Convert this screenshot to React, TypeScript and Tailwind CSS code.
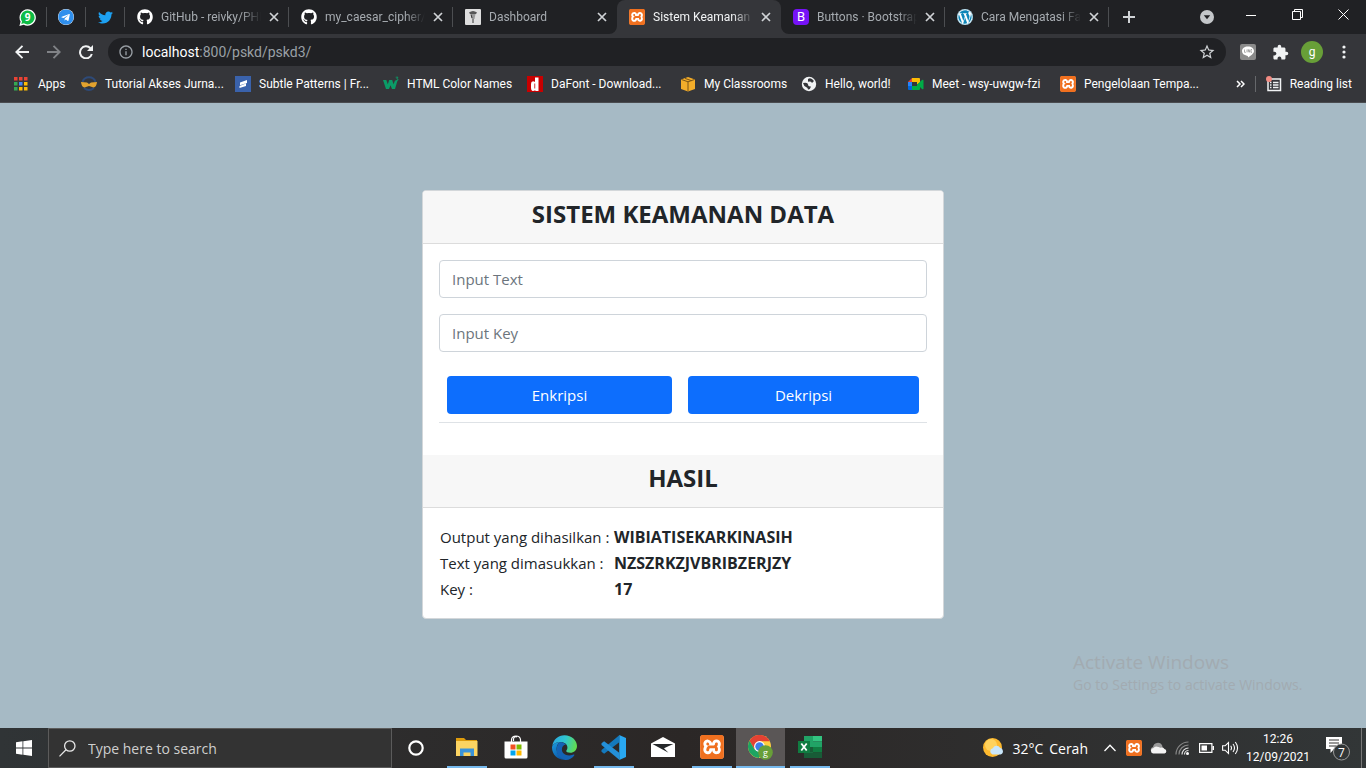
import type { ReactNode } from "react";
import { FaGithub, FaTelegram, FaTwitter, FaWordpress } from "react-icons/fa";
import { MdExtension, MdStarOutline, MdInfoOutline } from "react-icons/md";
import { SiXampp } from "react-icons/si";

function Xampp({ box, size }: { box: string; size: number }) {
  return (
    <span className={`${box} inline-flex shrink-0 items-center justify-center rounded-sm bg-white text-[#f0701f]`}>
      <SiXampp size={size} />
    </span>
  );
}

function CloseGlyph() {
  return (
    <svg width="10" height="10" viewBox="0 0 10 10" stroke="currentColor" strokeWidth="1.7">
      <path d="M1 1l8 8M9 1L1 9" />
    </svg>
  );
}

const whatsapp = (
  <svg width="17" height="17" viewBox="0 0 17 17">
    <path d="M8.5.3a8.2 8.2 0 1 1-3.8 15.4L.4 16.9l1.2-4.3A8.2 8.2 0 0 1 8.5.3z" fill="#fff" />
    <path d="M8.6 1.6a6.9 6.9 0 1 1-3.7 12.7l-2.6.7.7-2.6A6.9 6.9 0 0 1 8.6 1.6z" fill="#0ebc45" />
    <text x="8.6" y="12" textAnchor="middle" fontSize="10" fontWeight="700" fill="#fff" fontFamily="Open Sans, sans-serif">9</text>
  </svg>
);

const dashboardIcon = (
  <svg width="16" height="16" viewBox="0 0 16 16">
    <rect width="16" height="16" rx="1" fill="#dedede" />
    <path d="M4 3.500q4-3 8 0l-1 1.500H5z" fill="#555" />
    <path d="M6 5h4.500l-1 5H6.800z" fill="#999" />
    <path d="M6 5.500l1 3.500M8 10v4" stroke="#333" strokeWidth="1" />
  </svg>
);

const bootstrapIcon = (
  <span className="flex size-4 items-center justify-center rounded-sm bg-[#7612f7] text-[13px] leading-4 text-white">B</span>
);

type Tab = { title: string; icon: ReactNode; active?: boolean; edge?: boolean };

const tabs: Tab[] = [
  { title: "GitHub - reivky/PHP", icon: <FaGithub size={16} color="#fff" />, edge: true },
  { title: "my_caesar_cipher/index", icon: <FaGithub size={16} color="#fff" />, edge: true },
  { title: "Dashboard", icon: dashboardIcon },
  { title: "Sistem Keamanan Data", icon: <Xampp box="size-4" size={16} />, active: true },
  { title: "Buttons · Bootstrap v5", icon: bootstrapIcon, edge: true },
  {
    title: "Cara Mengatasi Fatal",
    icon: <span className="flex rounded-full bg-white text-[#0d86b8]"><FaWordpress size={16} /></span>,
    edge: true,
  },
];

function TabStrip() {
  return (
    <div className="flex h-[34px] items-stretch bg-[#202124] pl-2 text-[#a6abb0]">
      {[whatsapp, <FaTelegram size={16} color="#2f8fed" className="rounded-full bg-white" />, <FaTwitter size={15} color="#1da1f2" />].map((icon, i) => (
        <button key={i} aria-label="Pinned tab" className="flex w-[39px] shrink-0 items-center">
          <span className="flex flex-1 justify-center">{icon}</span>
          <span className="h-5 w-px bg-[#4c4e51]" />
        </button>
      ))}
      {tabs.map((tab) => (
        <div
          key={tab.title}
          className={`relative flex w-[164px] min-w-0 items-center pl-3 ${tab.active ? "rounded-t-lg bg-[#35363a] text-[#f1f3f4]" : ""}`}
        >
          {tab.active && (
            <svg className="absolute bottom-0 -left-2" width="180" height="8" viewBox="0 0 180 8" fill="#35363a">
              <path d="M8 0v8H0a8 8 0 0 0 8-8zM172 0v8h8a8 8 0 0 1-8-8z" />
            </svg>
          )}
          {tab.icon}
          <a
            href="#tab"
            className="ml-2 w-[100px] overflow-hidden [mask-image:linear-gradient(to_right,black_80%,transparent)] text-[12px] whitespace-nowrap"
          >
            {tab.title}
          </a>
          <button aria-label={`Close ${tab.title}`} className="ml-2 flex text-[#d0d3d6]">
            <CloseGlyph />
          </button>
          {tab.edge && <span className="ml-auto h-5 w-px bg-[#4c4e51]" />}
        </div>
      ))}
      <button aria-label="New tab" className="ml-3.5 flex items-center text-[#d0d3d6]">
        <svg width="12" height="12" viewBox="0 0 12 12" stroke="currentColor" strokeWidth="2"><path d="M6 0v12M0 6h12" /></svg>
      </button>
      <div className="ml-auto flex items-stretch text-white">
        <button aria-label="Search tabs" className="mr-3.5 flex items-center">
          <svg width="14" height="14" viewBox="0 0 14 14"><circle cx="7" cy="7" r="7" fill="#c4c7ca" /><path d="M3.8 5.3h6.4L7 9.3z" fill="#202124" /></svg>
        </button>
        <button aria-label="Minimize" className="flex w-[46px] items-center justify-center pb-1">
          <span className="h-px w-2.5 bg-white" />
        </button>
        <button aria-label="Restore" className="flex w-[46px] items-center justify-center pb-1.5">
          <svg width="11" height="11" viewBox="0 0 11 11" fill="none" stroke="currentColor"><path d="M.5 2.5h8v8h-8zM2.5 2.5v-2h8v8h-2" /></svg>
        </button>
        <button aria-label="Close window" className="flex w-[46px] items-center justify-center pb-1.5">
          <svg width="11" height="11" viewBox="0 0 11 11" stroke="currentColor"><path d="M.5.5l10 10M10.5.5l-10 10" /></svg>
        </button>
      </div>
    </div>
  );
}

function ToolButton({ label, children }: { label: string; children: ReactNode }) {
  return (
    <button aria-label={label} className="flex w-8 shrink-0 items-center justify-center text-[#f1f3f4]">
      {children}
    </button>
  );
}

function Toolbar() {
  return (
    <div className="flex h-9 items-center bg-[#35363a] px-1.5">
      <ToolButton label="Back">
        <svg width="14" height="14" viewBox="0 0 14 14" fill="none" stroke="currentColor" strokeWidth="1.9"><path d="M14 7H1.5M7.5.8L1.3 7l6.2 6.2" /></svg>
      </ToolButton>
      <ToolButton label="Forward">
        <svg width="14" height="14" viewBox="0 0 14 14" fill="none" stroke="#818387" strokeWidth="1.9"><path d="M0 7h12.5M6.5.8L12.7 7l-6.2 6.2" /></svg>
      </ToolButton>
      <ToolButton label="Reload">
        <svg width="14" height="14" viewBox="0 0 14 14"><path d="M11.4 3.2A6 6 0 1 0 12.8 9" fill="none" stroke="currentColor" strokeWidth="2" /><path d="M14 0v6H8z" fill="currentColor" /></svg>
      </ToolButton>
      <div className="ml-1.5 flex h-7 flex-1 items-center rounded-full bg-[#202124] px-2.5 text-[14px] text-[#9aa0a6]">
        <MdInfoOutline size={16} />
        <a href="#address" className="ml-2 flex-1"><span className="text-white">localhost</span>:800/pskd/pskd3/</a>
        <button aria-label="Bookmark this page" className="text-[#d0d3d6]"><MdStarOutline size={18} /></button>
      </div>
      <div className="ml-1.5 flex">
        <ToolButton label="LINE">
          <svg width="16" height="16" viewBox="0 0 16 16"><rect width="16" height="16" rx="2" fill="#8b8b8b" /><path d="M8 2.500c3.500 0 6 2 6 4.600c0 2.500-3 4.500-6 6.400.3-1-.2-1.600-1-1.800-3-.3-5-2.100-5-4.600 0-2.600 2.500-4.600 6-4.600z" fill="#fff" /><path d="M4.500 5.500v2.800h1.400M7 5.500v2.800M8.300 8.300V5.500l1.400 2.800V5.500M12 5.500h-1v2.800h1" stroke="#8b8b8b" strokeWidth=".7" fill="none" /></svg>
        </ToolButton>
        <ToolButton label="Extensions"><MdExtension size={17} /></ToolButton>
        <ToolButton label="Profile">
          <span className="flex size-[22px] items-center justify-center rounded-full bg-[#689f38] text-[12px] leading-none text-white">g</span>
        </ToolButton>
        <ToolButton label="Menu">
          <svg width="4" height="14" viewBox="0 0 4 14" fill="currentColor"><circle cx="2" cy="2" r="1.600" /><circle cx="2" cy="7" r="1.600" /><circle cx="2" cy="12" r="1.600" /></svg>
        </ToolButton>
      </div>
    </div>
  );
}

const appsIcon = (
  <svg width="14" height="14" viewBox="0 0 14 14">
    {["#ea4335", "#ea4335", "#ea4335", "#34a853", "#4285f4", "#fbbc05", "#34a853", "#fbbc05", "#fbbc05"].map((c, i) => (
      <rect key={i} x={(i % 3) * 5} y={Math.floor(i / 3) * 5} width="3.500" height="3.500" fill={c} />
    ))}
  </svg>
);

const bookmarks: { label: string; icon: ReactNode; width: string }[] = [
  { label: "Apps", width: "w-[67px]", icon: appsIcon },
  {
    label: "Tutorial Akses Jurna...", width: "w-[154px]",
    icon: <svg width="16" height="16" viewBox="0 0 16 16"><path d="M1.500 6a6.800 6.800 0 0 1 13 0M3 12q5 4 10 0" fill="none" stroke="#2e4a78" strokeWidth="2" /><path d="M0 6l6 .5 2 1.500 2-1.500 6-.5q-.5 5-3.500 5.500L8 10l-4.500 1.500Q.5 11 0 6z" fill="#e2a22f" /></svg>,
  },
  {
    label: "Subtle Patterns | Fr...", width: "w-[148px]",
    icon: <svg width="16" height="16" viewBox="0 0 16 16"><rect width="16" height="16" fill="#3a62ab" /><path d="M5 6.500L12 4v3L5 9.300zM4.500 10L11 7.500v2.500l-6.500 2z" fill="#fff" /></svg>,
  },
  {
    label: "HTML Color Names", width: "w-[144px]",
    icon: <svg width="16" height="16" viewBox="0 0 16 16"><path d="M0 4h3.300l1.500 4.200L6.200 4h3l1.300 4.200L12 4.500h2.500L12 13H9L7.500 9.200 6 13H3z" fill="#0b9b67" /><path d="M12.700 1.200h2.300l-1.200 1.500q1.700.1 1.200 1.400-.8.900-2 .2" fill="none" stroke="#0b9b67" strokeWidth=".9" /></svg>,
  },
  {
    label: "DaFont - Download...", width: "w-[153px]",
    icon: <svg width="16" height="16" viewBox="0 0 16 16"><rect width="16" height="16" fill="#c80000" /><path d="M8 1.500h3.500V15H8.300v-1q-1 1.200-2.800 1Q4 14.500 4 12V8q0-2.500 2-2.700 1.200 0 2 .7zM7.400 7.500v5h.8v-5z" fill="#fff" /></svg>,
  },
  {
    label: "My Classrooms", width: "w-[121px]",
    icon: <svg width="16" height="16" viewBox="0 0 16 16"><path d="M1 3.500L8 1l7 2.500V13l-7 2.500L1 13z" fill="#f3ad2a" /><path d="M1.500 3.500L8 5.800l6.500-2.300M8 5.800V15M5 2.400l6.500 2.300" stroke="#7a5416" fill="none" /></svg>,
  },
  {
    label: "Hello, world!", width: "w-[107px]",
    icon: <svg width="16" height="16" viewBox="0 0 16 16"><circle cx="8" cy="8" r="7.200" fill="#f1f3f4" /><path d="M2 7q5-1 5 1.500t3 2Q9 14 7 13.500q0-2-2-2.500T2 7zM7 3q3-2 6 2l-2 2q-1-2-4-1.200z" fill="#35363a" /></svg>,
  },
  {
    label: "Meet - wsy-uwgw-fzi", width: "w-[152px]",
    icon: <svg width="16" height="16" viewBox="0 0 16 16"><path d="M0 6l4-4v4z" fill="#ea4335" /><path d="M4 2h7q1 0 1 1v4L9 8.500V6H4z" fill="#fbbc04" /><path d="M0 6h4v4H0z" fill="#2684fc" /><path d="M0 10h4v4H1q-1 0-1-1z" fill="#0066da" /><path d="M4 10h5V8.500l5-4.500q1.500-.7 1.500.5v8q0 1.200-1.500.5l-2-2v2q0 1-1 1H4z" fill="#00ac47" /></svg>,
  },
  { label: "Pengelolaan Tempa...", width: "w-[152px]", icon: <Xampp box="size-4" size={16} /> },
];

function BookmarksBar() {
  return (
    <div className="flex h-[33px] items-center border-b border-[#4a4c50] bg-[#35363a] pr-3.5 pb-1 pl-3.5 text-[12px] text-white">
      {bookmarks.map((b) => (
        <a key={b.label} href="#bookmark" className={`${b.width} flex shrink-0 items-center gap-2 whitespace-nowrap first:gap-2.5`}>
          {b.icon}
          <span>{b.label}</span>
        </a>
      ))}
      <div className="ml-auto flex items-center">
        <button aria-label="More bookmarks" className="mr-2.5 flex">
          <svg width="9" height="8" viewBox="0 0 9 8" fill="none" stroke="currentColor" strokeWidth="1.500"><path d="M1 1l3 3-3 3M5 1l3 3-3 3" /></svg>
        </button>
        <span className="mr-2.5 h-4 w-px bg-[#66686b]" />
        <button className="flex items-center gap-2 whitespace-nowrap">
          <svg width="16" height="16" viewBox="0 0 16 16"><path d="M2 3h12.500v11.500H2zM4 6.500h1.500M7 6.500h5.500M4 9h1.500M7 9h5.500M4 11.500h1.500M7 11.500h5.500" fill="none" stroke="#f1f3f4" strokeWidth="1.500" /><circle cx="3" cy="3" r="3" fill="#f28b82" /></svg>
          Reading list
        </button>
      </div>
    </div>
  );
}

function CardHeader({ children }: { children: ReactNode }) {
  return (
    <h2 className="h-[53px] border-b border-[#dcdcdc] bg-[#f7f7f7] pt-2 text-center text-[24px] leading-[30px] font-bold">{children}</h2>
  );
}

const results = [
  ["Output yang dihasilkan :", "WIBIATISEKARKINASIH"],
  ["Text yang dimasukkan :", "NZSZRKZJVBRIBZERJZY"],
  ["Key :", "17"],
];

function CipherCard() {
  const field = "block h-[38px] w-full rounded border border-[#ced4da] bg-white px-3 placeholder:text-[#6c757d]";
  const action = "h-[38px] rounded bg-[#0d6efd] text-white";
  return (
    <section className="w-full max-w-[522px] overflow-hidden rounded border border-[#d3d7da] bg-white text-[15px] text-[#212529]">
      <CardHeader>SISTEM KEAMANAN DATA</CardHeader>
      <form className="px-4 pt-4 pb-8" onSubmit={(e) => e.preventDefault()}>
        <div className="flex flex-col gap-4">
          <input aria-label="Input Text" placeholder="Input Text" className={field} />
          <input aria-label="Input Key" placeholder="Input Key" className={field} />
        </div>
        <div className="mt-4 grid grid-cols-[225fr_231fr] gap-4 border-b border-[#dee2e6] p-2">
          <button className={action}>Enkripsi</button>
          <button className={action}>Dekripsi</button>
        </div>
      </form>
      <CardHeader>HASIL</CardHeader>
      <table className="m-4 border-separate border-spacing-0 leading-[26px]">
        <tbody>
          {results.map(([label, value]) => (
            <tr key={label}>
              <th scope="row" className="w-[175px] py-0 pl-px text-left align-top font-normal whitespace-nowrap">{label}</th>
              <td className="py-0 align-top text-[16px] leading-[26px] font-bold">{value}</td>
            </tr>
          ))}
        </tbody>
      </table>
    </section>
  );
}

const explorerIcon = (
  <svg width="24" height="24" viewBox="0 0 24 24"><path d="M1 3h8l2 2h11v5H1z" fill="#dd9b0c" /><path d="M1 6h21.500v15H1z" fill="#fcd462" /><path d="M5 13.500h14V21h-3.500v-3.500h-7V21H5z" fill="#3b93d9" /></svg>
);
const storeIcon = (
  <svg width="24" height="24" viewBox="0 0 24 24"><path d="M7.500 7V4.500Q8 1 12 1t4.500 3.500V7M9.500 6V4Q10 1 13 2" fill="none" stroke="#fff" strokeWidth="1.200" /><path d="M.5 6.500h23V22q0 1.500-1.500 1.500H2Q.5 23.500.5 22z" fill="#fff" /><path d="M6.500 9.500h5v5h-5z" fill="#f25022" /><path d="M12.500 9.500h5v5h-5z" fill="#7fba00" /><path d="M6.500 15.500h5v5h-5z" fill="#00a4ef" /><path d="M12.500 15.500h5v5h-5z" fill="#ffb900" /></svg>
);
const edgeIcon = (
  <svg width="25" height="25" viewBox="0 0 24 24">
    <defs>
      <linearGradient id="edgeTop" x1="0" y1="0.300" x2="1" y2="0.500"><stop offset="0" stopColor="#2aa8e0" /><stop offset=".5" stopColor="#30c6d0" /><stop offset="1" stopColor="#62dd4d" /></linearGradient>
      <linearGradient id="edgeLow" x1="0" y1="0" x2="0.600" y2="1"><stop offset="0" stopColor="#1b9de2" /><stop offset="1" stopColor="#0b56a5" /></linearGradient>
    </defs>
    <path d="M.3 10.500C1 4.500 6 .2 12 .2c7 0 12 5 12 10.300 0 4-3 6.500-6.500 6.500-2.500 0-3.800-.8-3.800-1.700 0-.7 1.100-1.100 1.100-3.300 0-3-3-5.200-6.500-5.200-3.700 0-6.600 1.400-8 3.700z" fill="url(#edgeTop)" />
    <path d="M.3 10.500C2 8 5 6.700 8.300 6.800 5.500 8 4 11 4.500 14.500c.5 4.500 4 8.500 8.500 9.200C6 24.500 0 19 0 12z" fill="url(#edgeLow)" />
    <path d="M8.300 6.800c2.300.2 4 1.200 5.200 2.700-2-.3-4 1.500-4 4.500 0 4.500 5.500 7 10.500 5 1.300-.5 1.800 0 1.200.9C19 22.500 16 24.300 12.500 23.900 7 22.900 4 18.700 4.500 13c.3-3 1.500-5 3.800-6.200z" fill="#1463b5" />
  </svg>
);
const codeIcon = (
  <svg width="25" height="25" viewBox="0 0 24 24"><path d="M17.500 0L24 2.800v18.400L17.500 24z" fill="#29a8f2" /><path d="M17.500.2v6.700L3 18 .5 16v-1.500z" fill="#1479bd" /><path d="M17.500 23.800v-6.700L3 6 .5 8v1.500z" fill="#2490d8" /></svg>
);
const mailIcon = (
  <svg width="24" height="20" viewBox="0 0 24 20"><path d="M12 0l12 6.500V20H0V6.500z" fill="#fff" /><path d="M1.500 7h20.800L13 11.200l4.500 4.500z" fill="#25282a" /></svg>
);
const chromeIcon = (
  <svg width="25" height="25" viewBox="0 0 25 25">
    <circle cx="11.500" cy="11.500" r="11.500" fill="#ffcd40" />
    <path d="M1.500 5.800A11.500 11.500 0 0 1 21.800 6.300H11.500L6.500 14.300z" fill="#e34133" />
    <path d="M1.500 5.800A11.500 11.500 0 0 0 11 23l5-8.500-9.500-.2z" fill="#1da462" />
    <circle cx="11.500" cy="11.500" r="5.400" fill="#fff" /><circle cx="11.500" cy="11.500" r="4.200" fill="#3e7de8" />
    <circle cx="17.500" cy="17.500" r="7.300" fill="#689f38" />
    <text x="17.500" y="20.500" textAnchor="middle" fontSize="9" fill="#fff" fontFamily="Open Sans, sans-serif">g</text>
  </svg>
);
const excelIcon = (
  <svg width="24" height="22" viewBox="0 0 24 22"><path d="M6 0h9v22H6z" fill="#21a366" /><path d="M15 0h9v5.500h-9z" fill="#33c481" /><path d="M15 5.500h9V11h-9z" fill="#21a366" /><path d="M6 11h9v5.500H6z" fill="#185c37" /><path d="M15 11h9v5.500h-9z" fill="#107c41" /><path d="M6 16.500h18V22H6z" fill="#185c37" /><path d="M0 5h12v12H0z" fill="#107c41" /><path d="M3.300 7.500l5.400 7M8.700 7.500l-5.400 7" stroke="#fff" strokeWidth="1.800" /></svg>
);

const taskbarApps: { name: string; icon: ReactNode; open?: boolean; active?: boolean }[] = [
  { name: "File Explorer", icon: explorerIcon, open: true },
  { name: "Microsoft Store", icon: storeIcon },
  { name: "Edge", icon: edgeIcon },
  { name: "Visual Studio Code", icon: codeIcon, open: true },
  { name: "Mail", icon: mailIcon },
  { name: "XAMPP", icon: <Xampp box="size-6" size={24} />, open: true },
  { name: "Chrome", icon: chromeIcon, active: true },
  { name: "Excel", icon: excelIcon, open: true },
];

function Taskbar() {
  return (
    <footer className="flex h-10 items-stretch bg-linear-to-r from-[#303436] via-[#2b2726] to-[#323637] text-white">
      <button aria-label="Start" className="flex w-12 shrink-0 items-center justify-center">
        <svg width="16" height="16" viewBox="0 0 16 16" fill="#fff"><path d="M0 2.200L6.500 1.300v6.300H0zM7.300 1.200L16 0v7.600H7.300zM0 8.400h6.500v6.300L0 13.800zM7.300 8.400H16V16l-8.700-1.200z" /></svg>
      </button>
      <label className="flex w-[344px] items-center gap-3 border border-[#5b5b5b] bg-[#333333] pl-2.5">
        <svg width="17" height="17" viewBox="0 0 17 17" fill="none" stroke="#e8e8e8" strokeWidth="1.300"><circle cx="10.800" cy="6" r="5.200" /><path d="M7 9.800L.5 16.400" /></svg>
        <input aria-label="Search" placeholder="Type here to search" className="min-w-0 flex-1 bg-transparent text-[14px] placeholder:text-[#cfcfcf]" />
      </label>
      <button aria-label="Cortana" className="mr-0.5 flex w-12 shrink-0 items-center justify-center">
        <svg width="16" height="16" viewBox="0 0 16 16"><circle cx="8" cy="8" r="6.700" fill="none" stroke="#fff" strokeWidth="2.200" /></svg>
      </button>
      {taskbarApps.map((app) => (
        <button key={app.name} aria-label={app.name} className={`flex w-[49px] shrink-0 flex-col items-center ${app.active ? "bg-[#5a5656]" : ""}`}>
          <span className="flex flex-1 items-center">{app.icon}</span>
          <span className={`h-0.5 ${app.active ? "w-full bg-[#76b9ed]" : app.open ? "w-10 bg-[#76b9ed]" : "w-10"}`} />
        </button>
      ))}
      <div className="ml-auto flex items-center">
        <button className="flex items-center text-[14px] whitespace-nowrap">
          <svg width="21" height="20" viewBox="0 0 21 20"><circle cx="9.500" cy="9.500" r="9.500" fill="#fdb92e" /><circle cx="8" cy="7" r="6" fill="#ffd25c" /><path d="M9.500 16.500a3.200 3.200 0 0 1 .3-6.200 4 4 0 0 1 7.200-.6 3.500 3.500 0 0 1 .5 6.800z" fill="#c9e6fa" /></svg>
          <span className="mr-1.5 ml-2">32°C</span>
          <span>Cerah</span>
        </button>
        <button aria-label="Show hidden icons" className="ml-4 flex">
          <svg width="12" height="8" viewBox="0 0 12 8" fill="none" stroke="#fff" strokeWidth="1.300"><path d="M.5 7L6 1.300 11.500 7" /></svg>
        </button>
        <span className="ml-2.5 flex"><Xampp box="size-4" size={16} /></span>
        <svg className="ml-2" width="17" height="12" viewBox="0 0 17 12"><path d="M1 9a3 3 0 0 1 2-4 5 5 0 0 1 9-2l1 4z" fill="#999" /><path d="M3 11.500a2.800 2.800 0 0 1 .5-5.500Q5 3.500 8.500 5l2 .8a3.500 3.500 0 0 1 4 1.200 2.300 2.300 0 0 1 0 4.500z" fill="#f4f4f4" /></svg>
        <svg className="ml-2" width="14" height="14" viewBox="0 0 14 14" fill="none" strokeWidth="1.200"><path d="M1 13.500A12.500 12.500 0 0 1 13.500 1M4 13.500A9.500 9.500 0 0 1 13.500 4" stroke="#888" /><path d="M7 13.500A6.500 6.500 0 0 1 13.500 7M9.500 13.500a4 4 0 0 1 4-4" stroke="#ddd" /><circle cx="12.500" cy="12.500" r="1.500" fill="#fff" /></svg>
        <svg className="ml-2.5" width="15" height="10" viewBox="0 0 15 10"><path d="M.6.600h12.300v8.800H.6z" fill="none" stroke="#fff" strokeWidth="1.200" /><path d="M2.500 2.500H8v5H2.500zM13.500 3H15v4h-1.500z" fill="#fff" /></svg>
        <svg className="ml-2" width="17" height="14" viewBox="0 0 17 14" fill="none" stroke="#fff" strokeWidth="1.100"><path d="M.6 4.800h2.500L6.500 1.500v11L3.100 9.200H.6zM8.700 4.800q1.600 2.200 0 4.400M11 3q3 4 0 8M13.300 1q4.500 6 0 12" /></svg>
        <button className="ml-1.5 w-[66px] text-center font-[Roboto,sans-serif] text-[12px] leading-[18px]">
          <span className="block">12:26</span>
          <span className="block">12/09/2021</span>
        </button>
        <button aria-label="Notifications, 7 new" className="ml-3.5 flex">
          <svg width="26" height="26" viewBox="0 0 26 26"><path d="M1 2h16v12H9l-3.500 4v-4H1z" fill="#fff" /><path d="M4 5h10M4 8h10M4 11h7" stroke="#333" /><circle cx="16.500" cy="17" r="8" fill="#323637" stroke="#999" /><text x="16.500" y="21.500" textAnchor="middle" fontSize="12" fill="#fff" fontFamily="Open Sans, sans-serif">7</text></svg>
        </button>
        <span className="mr-1 ml-2.5 h-10 w-px bg-[#777]" />
      </div>
    </footer>
  );
}

export default function App() {
  return (
    <div className="flex min-h-screen flex-col font-['Open_Sans',sans-serif]">
      <header className="font-[Roboto,sans-serif]">
        <TabStrip />
        <Toolbar />
        <BookmarksBar />
      </header>
      <main className="relative flex flex-1 flex-col items-center bg-[#a6bac5] pt-[87px]">
        <CipherCard />
        <aside className="absolute right-14 bottom-[33px] w-[237px] whitespace-nowrap text-[#a2abb1]">
          <p className="text-[19px] leading-[26px]">Activate Windows</p>
          <p className="text-[14px] leading-5">Go to Settings to activate Windows.</p>
        </aside>
      </main>
      <Taskbar />
    </div>
  );
}
